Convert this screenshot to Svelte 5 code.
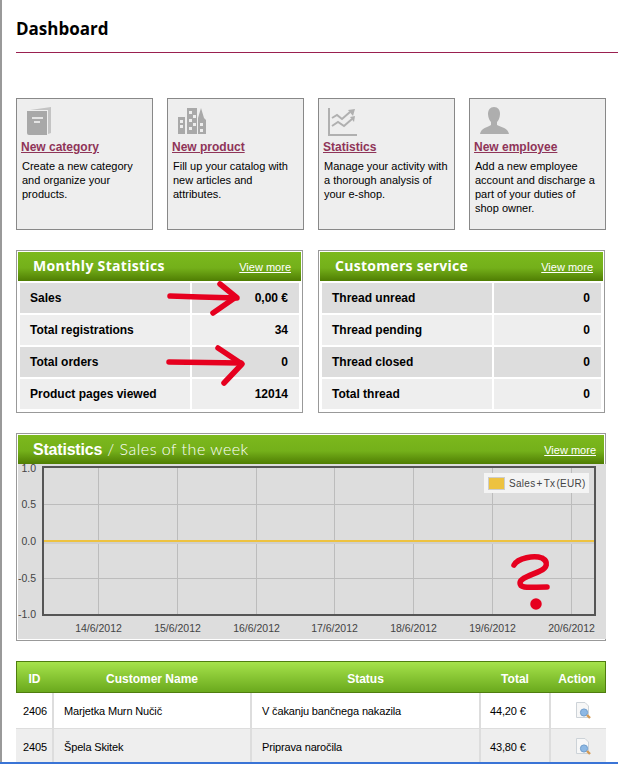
<script>
  const cards = [
    { icon: 'book', title: 'New category', text: 'Create a new category and organize your products.' },
    { icon: 'city', title: 'New product', text: 'Fill up your catalog with new articles and attributes.' },
    { icon: 'chart', title: 'Statistics', text: 'Manage your activity with a thorough analysis of your e-shop.' },
    { icon: 'user', title: 'New employee', text: 'Add a new employee account and discharge a part of your duties of shop owner.' }
  ];

  const panels = [
    {
      title: 'Monthly Statistics',
      rows: [['Sales', '0,00 €'], ['Total registrations', '34'], ['Total orders', '0'], ['Product pages viewed', '12014']]
    },
    {
      title: 'Customers service',
      rows: [['Thread unread', '0'], ['Thread pending', '0'], ['Thread closed', '0'], ['Total thread', '0']]
    }
  ];

  const orders = [
    { id: 2406, name: 'Marjetka Murn Nučič', status: 'V čakanju bančnega nakazila', total: '44,20 €' },
    { id: 2405, name: 'Špela Skitek', status: 'Priprava naročila', total: '43,80 €' }
  ];

  // chart coords are relative to the svg, which starts at x=18 y=464 on the page
  const gridX = [80, 159, 238, 316, 395, 474, 553];
  const dates = ['14/6/2012', '15/6/2012', '16/6/2012', '17/6/2012', '18/6/2012', '19/6/2012', '20/6/2012'];
  const yAxis = [['1.0', 4], ['0.5', 40], ['0.0', 77], ['-0.5', 114], ['-1.0', 150]];
</script>

<div class="page">
  <h1>Dashboard</h1>

  <div class="cards">
    {#each cards as card}
      <div class="card">
        <div class="card-icon">
          {#if card.icon === 'book'}
            <svg width="28" height="30" viewBox="0 0 28 30">
              <path d="M4 3 L25 0 V26 L22 27 V3 Z" fill="#c4c4c4" />
              <path d="M1 4 H21 V28 H3 Q1 28 1 26 Z" fill="#a8a8a8" />
              <path d="M6 10 H17 V12 H6 Z M8 14 H14 V16 H8 Z" fill="#e4e4e4" />
            </svg>
          {:else if card.icon === 'city'}
            <svg width="30" height="28" viewBox="0 0 30 28">
              <path d="M1 10 H8 V27 H1 Z M10 1 H20 V27 H10 Z M21 11 L24 1 L27 11 L29 13 V27 H21 Z" fill="#a9a9a9" />
              <path d="M3 13 h3 v3 h-3 Z M3 18 h3 v3 h-3 Z M12 4 h3 v3 h-3 Z M16 8 h3 v3 h-3 Z M12 12 h3 v3 h-3 Z M16 16 h3 v3 h-3 Z M12 20 h3 v3 h-3 Z M23 16 h3 v3 h-3 Z M23 22 h3 v3 h-3 Z" fill="#eee" />
            </svg>
          {:else if card.icon === 'chart'}
            <svg width="30" height="30" viewBox="0 0 30 30" fill="none" stroke="#b0b0b0">
              <path d="M1 1 V28 H29" stroke-width="2" />
              <path d="M4 11 L9 8 L14 12 L22 5" stroke-width="2" />
              <path d="M20 3 L27 2 L25 9 Z" fill="#b0b0b0" stroke="none" />
              <path d="M4 19 L10 15 L16 19 L24 12" stroke-width="2" />
              <path d="M22 10 L27 9 L26 15 Z" fill="#b0b0b0" stroke="none" />
            </svg>
          {:else}
            <svg width="30" height="28" viewBox="0 0 30 28">
              <path d="M15 0 C19 0 21 3 21 7 C21 11 19 14 18 15 V18 C22 20 29 21 30 27 H1 C2 21 9 20 12 18 V15 C11 14 9 11 9 7 C9 3 11 0 15 0 Z" fill="#aeaeae" />
            </svg>
          {/if}
        </div>
        <a href="#top" class="card-title">{card.title}</a>
        <p>{card.text}</p>
      </div>
    {/each}
  </div>

  <div class="panels">
    {#each panels as panel}
      <section class="panel">
        <header class="green">
          <span class="panel-title">{panel.title}</span>
          <a href="#top">View more</a>
        </header>
        <div class="rows">
          {#each panel.rows as row, i}
            <div class="row" class:dark={i % 2 === 0}>
              <span class="label">{row[0]}</span>
              <span class="value">{row[1]}</span>
            </div>
          {/each}
        </div>
      </section>
    {/each}
  </div>

  <section class="panel stats">
    <header class="green">
      <span class="panel-title"><b>Statistics</b> <i>/ Sales of the week</i></span>
      <a href="#top">View more</a>
    </header>
    <svg class="chart" width="588" height="175" viewBox="0 0 588 175">
      {#each gridX as x}
        <line x1={x + 0.5} x2={x + 0.5} y1="3" y2="150" stroke="#bcbcbc" />
      {/each}
      <line x1="26" x2="577" y1="40.5" y2="40.5" stroke="#bcbcbc" />
      <line x1="26" x2="577" y1="77.5" y2="77.5" stroke="#bcbcbc" />
      <line x1="26" x2="577" y1="114.5" y2="114.5" stroke="#bcbcbc" />
      <line x1="26" x2="576" y1="79" y2="79" stroke="#cfcfcf" stroke-width="2" />
      <line x1="26" x2="576" y1="77" y2="77" stroke="#edc240" stroke-width="2" />
      <rect x="25" y="3" width="552" height="148" fill="none" stroke="#555" stroke-width="2" />
      {#each yAxis as tick}
        <text x="18" y={tick[1] + 4} text-anchor="end">{tick[0]}</text>
      {/each}
      {#each dates as date, i}
        <text x={gridX[i] + 0.5} y="168" text-anchor="middle">{date}</text>
      {/each}
      <rect x="466" y="9" width="105" height="20" fill="#f4f4f4" />
      <rect x="470.5" y="13.5" width="16" height="12" fill="#edc240" stroke="#ccc" />
      <text class="legend" x="491" y="23">Sales + Tx (EUR)</text>
    </svg>
  </section>

  <div class="orders">
    <div class="order-row order-head">
      <span class="col-id">ID</span>
      <span class="col-name">Customer Name</span>
      <span class="col-status">Status</span>
      <span class="col-total">Total</span>
      <span class="col-action">Action</span>
    </div>
    {#each orders as order, i}
      <div class="order-row order" class:grey={i === 1}>
        <span class="col-id">{order.id}</span>
        <span class="col-name">{order.name}</span>
        <span class="col-status">{order.status}</span>
        <span class="col-total">{order.total}</span>
        <span class="col-action">
          <svg width="16" height="17" viewBox="0 0 16 17">
            <path d="M1.5 .5 H10 L13.5 4 V15.5 H1.5 Z" fill="#f7f7f7" stroke="#cdd3d8" />
            <circle cx="9" cy="10.5" r="3.6" fill="#8db8e4" stroke="#6f9dcc" />
            <path d="M12 13 L15 16" stroke="#d49a55" stroke-width="2.4" />
          </svg>
        </span>
      </div>
    {/each}
  </div>

  <!-- red marks painted over the screenshot -->
  <svg class="marks" width="618" height="764" viewBox="0 0 618 764" fill="none" stroke="#e6001f" stroke-width="5.5" stroke-linecap="round" stroke-linejoin="round">
    <path d="M170 296 L200 297 L237 298" />
    <path d="M220 284 L236 297 L213 313" />
    <path d="M169 362 L241 363" />
    <path d="M218 348 L242 364 L224 383" />
    <path d="M514 565 C518 558 534 555 542 558 C549 562 547 568 540 571 C532 575 520 578 520 583 C520 589 530 587 547 587" />
    <circle cx="536" cy="604" r="3" fill="#e6001f" />
  </svg>

  <div class="taskbar-line"></div>
</div>

<style>
  :global(body) {
    margin: 0;
    background: #fff;
  }

  .page {
    position: relative;
    box-sizing: border-box;
    width: 618px;
    height: 764px;
    overflow: hidden;
    padding-left: 16px;
    font-family: "Liberation Sans", Arial, sans-serif;
    color: #000;
  }

  .page::before {
    content: "";
    position: absolute;
    left: 0;
    top: 0;
    bottom: 0;
    width: 1.5px;
    background: #999;
  }

  h1 {
    margin: 0;
    height: 53px;
    box-sizing: border-box;
    padding-top: 18px;
    font-family: "Open Sans", sans-serif;
    font-size: 17px;
    line-height: 22px;
    font-weight: 700;
    border-bottom: 1px solid #9a2050;
  }

  .cards {
    display: flex;
    gap: 14px;
    margin-top: 45px;
  }

  .card {
    box-sizing: border-box;
    width: 137px;
    height: 132px;
    padding: 8px 5px 0;
    background: #eee;
    border: 1px solid #888;
  }

  .card-icon {
    height: 30px;
    padding-left: 4px;
  }

  .card-title {
    display: block;
    margin: 2px 0 0 -1px;
    font-size: 12px;
    line-height: 16px;
    font-weight: 700;
    color: #8f3458;
    text-decoration: underline;
  }

  .card p {
    margin: 4px 0 0;
    font-size: 11px;
    line-height: 14px;
  }

  .panels {
    display: flex;
    gap: 15px;
    margin-top: 20px;
  }

  .panel {
    box-sizing: border-box;
    width: 287px;
    height: 163px;
    padding: 1px;
    border: 1px solid #999;
    background: #fff;
  }

  .green {
    display: flex;
    align-items: center;
    justify-content: space-between;
    height: 29px;
    padding: 0 10px 0 15px;
    background: linear-gradient(#7cb91d 0%, #74b01a 55%, #4f7d03 100%);
    color: #fff;
  }

  .green a {
    font-size: 11px;
    color: #fff;
    text-decoration: underline;
  }

  .panel-title {
    padding-bottom: 2px;
    font-family: "Open Sans", sans-serif;
    font-size: 14px;
    font-weight: 700;
    letter-spacing: 0.3px;
  }

  .rows {
    display: flex;
    flex-direction: column;
    gap: 2px;
    padding: 2px 2px 0;
  }

  .row {
    display: grid;
    grid-template-columns: 170px 107px;
    gap: 2px;
    height: 30px;
    font-size: 12px;
    font-weight: 700;
    line-height: 30px;
  }

  .row span {
    background: #eee;
  }

  .row.dark span {
    background: #ddd;
  }

  .label {
    padding-left: 10px;
  }

  .value {
    padding-right: 11px;
    text-align: right;
  }

  .stats {
    width: 590px;
    height: 208px;
    margin-top: 20px;
  }

  .stats .green {
    padding-right: 8px;
  }

  .stats .panel-title {
    font-size: 16px;
    letter-spacing: 0;
  }

  .stats b {
    font-family: "Liberation Sans", Arial, sans-serif;
    letter-spacing: -0.2px;
  }

  .stats i {
    padding-left: 1px;
    font-family: "Lato", sans-serif;
    font-style: normal;
    font-weight: 300;
    letter-spacing: 0.5px;
  }

  .chart {
    display: block;
    overflow: visible;
    background: #ddd;
  }

  .chart text {
    font-family: "Liberation Sans", Arial, sans-serif;
    font-size: 10.5px;
    fill: #444;
  }

  .chart .legend {
    font-size: 10px;
    letter-spacing: 0.3px;
    word-spacing: -2px;
  }

  .orders {
    width: 590px;
    margin-top: 20px;
  }

  .order-row {
    display: grid;
    grid-template-columns: 38px 198px 229px 70px 1fr;
    align-items: center;
  }

  .order-head {
    box-sizing: border-box;
    grid-template-columns: 37px 198px 229px 70px 1fr;
    height: 32px;
    padding-top: 4px;
    border: 1px solid #4f7d0f;
    background: linear-gradient(#a6e34b, #6aa91d);
    color: #fff;
    font-size: 12px;
    font-weight: 700;
    text-align: center;
  }

  .order-head span {
    padding-right: 2px;
  }

  .order {
    height: 36px;
    font-size: 11px;
    letter-spacing: -0.15px;
    border-bottom: 1px solid #ddd;
    box-sizing: border-box;
  }

  .order.grey {
    background: #eee;
  }

  .order span {
    display: flex;
    align-items: center;
    height: 100%;
    box-sizing: border-box;
    padding-left: 10px;
    border-right: 2px solid #ddd;
  }

  .order .col-id {
    padding-left: 7px;
  }

  .order .col-total {
    padding-left: 9px;
  }

  .order .col-action {
    justify-content: center;
    padding-left: 9px;
    border-right: 0;
  }

  .marks {
    position: absolute;
    left: 0;
    top: 0;
    pointer-events: none;
  }

  .taskbar-line {
    position: absolute;
    left: 0;
    right: 0;
    bottom: 0;
    height: 2px;
    background: #3a74d6;
  }
</style>
